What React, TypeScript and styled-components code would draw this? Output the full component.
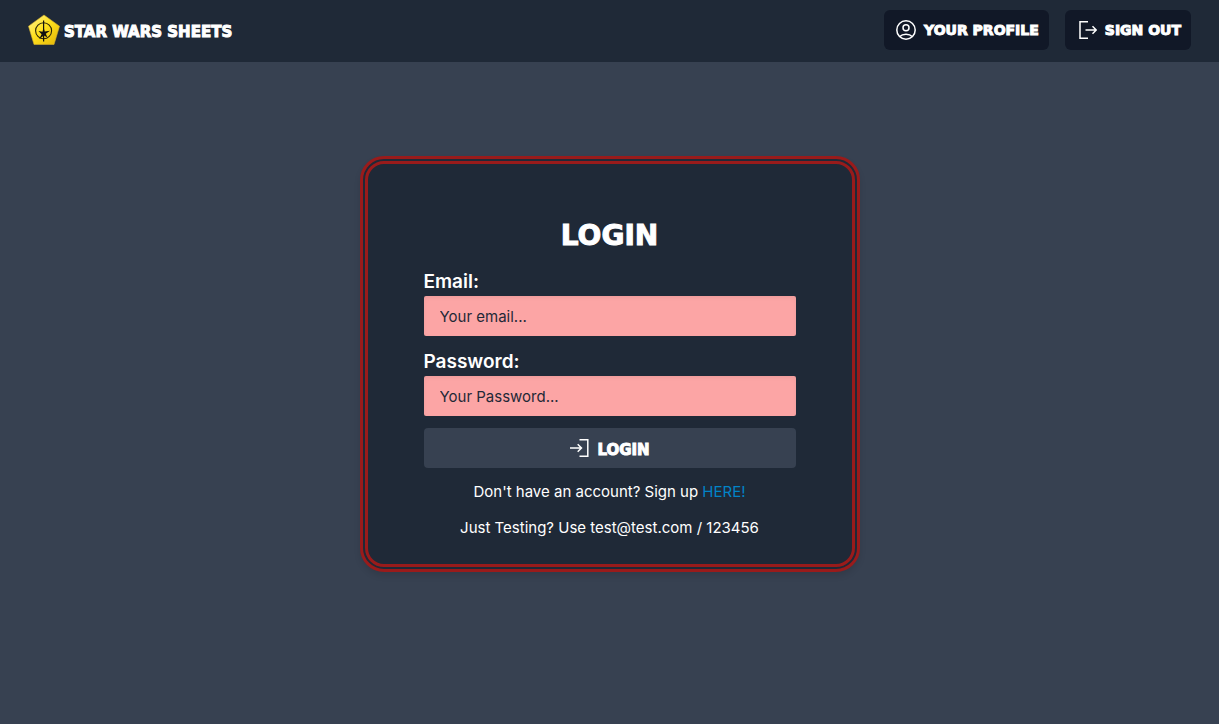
import React from "react";
import styled, { createGlobalStyle } from "styled-components";

const GlobalStyle = createGlobalStyle`
  *, *::before, *::after { box-sizing: border-box; }
  body {
    margin: 0;
    background: #374151;
    color: #fff;
    font-family: Inter, "Liberation Sans", sans-serif;
    font-size: 15px;
    line-height: 24px;
  }
  h1, p { margin: 0; }
  button, input { font: inherit; border: 0; }
`;

const Header = styled.header`
  display: flex;
  align-items: center;
  justify-content: space-between;
  padding: 10px 28px 12px;
  background: #1f2937;
`;

const Brand = styled.a`
  display: flex;
  align-items: center;
  gap: 4px;
  color: inherit;
  text-decoration: none;
`;

const Display = styled.span<{ $size: number }>`
  display: block;
  font-family: "DejaVu Sans", sans-serif;
  font-weight: 700;
  font-size: ${({ $size }) => $size}px;
  -webkit-text-stroke: 1px currentColor;
  text-transform: uppercase;
  white-space: nowrap;
`;

const LoweredDisplay = styled(Display)`
  padding-top: 4px;
`;

const Nav = styled.nav`
  display: flex;
  gap: 16px;
`;

const NavButton = styled.button`
  display: flex;
  align-items: center;
  gap: 8px;
  height: 40px;
  padding: 0 10px 0 12px;
  border-radius: 6px;
  background: #111827;
  color: #fff;
  cursor: pointer;
`;

const Main = styled.main`
  display: flex;
  justify-content: center;
  padding: 94px 16px;
`;

const Card = styled.form`
  display: flex;
  flex-direction: column;
  gap: 12px;
  width: 100%;
  max-width: 500px;
  padding: 52px 56px 24px;
  border: 8px double #991b1b;
  border-radius: 24px;
  background: #1f2937;
  box-shadow: 0 4px 6px rgba(0, 0, 0, 0.1);
`;

const Title = styled.h1`
  line-height: 40px;
  text-align: center;
`;

const Field = styled.label`
  display: flex;
  flex-direction: column;
  font-size: 19px;
  font-weight: 600;
  line-height: 28px;
`;

const TextInput = styled.input`
  width: 100%;
  height: 40px;
  padding: 0 16px;
  border-radius: 2px;
  background: #fca5a5;
  box-shadow: inset 0 2px 4px rgba(0, 0, 0, 0.06);
  color: #1f2937;
  font-size: 15px;
  font-weight: 400;
  &::placeholder { color: #1f2937; opacity: 1; }
`;

const SubmitButton = styled.button`
  display: flex;
  align-items: center;
  justify-content: center;
  gap: 8px;
  height: 40px;
  border-radius: 4px;
  background: #374151;
  color: #fff;
  cursor: pointer;
`;

const Note = styled.p`
  text-align: center;
`;

const SignUpLink = styled.a`
  color: #0284c7;
  text-decoration: none;
`;

const Icon = styled.svg.attrs({
  width: 20,
  height: 20,
  viewBox: "0 0 20 20",
  fill: "none",
  stroke: "currentColor",
  strokeWidth: 1.5,
  "aria-hidden": true,
})`
  flex: none;
`;

const ProfileIcon = () => (
  <Icon>
    <circle cx="10" cy="10" r="9.2" />
    <circle cx="10" cy="7.8" r="3" />
    <path d="M3.8 16.6C5.2 15 7.3 14.2 10 14.2s4.8.8 6.2 2.4" />
  </Icon>
);

const SignOutIcon = () => (
  <Icon>
    <path d="M11 1.700H3V18.300H11" />
    <path d="M8.500 10H19.500M15.500 6.200 19.300 10 15.500 13.800" />
  </Icon>
);

const SignInIcon = () => (
  <Icon>
    <path d="M10.500 1.700H18.800V18.300H10.500" />
    <path d="M1 10H12.500M8.700 6.200 12.500 10 8.700 13.800" />
  </Icon>
);

const Logo = () => (
  <svg width="32" height="32" viewBox="0 0 32 32" aria-hidden="true">
    <defs>
      <linearGradient id="gold" x1="0" y1="0" x2="1" y2="1">
        <stop offset="0" stopColor="#fff3a0" />
        <stop offset="0.45" stopColor="#ffe11f" />
        <stop offset="1" stopColor="#e3b505" />
      </linearGradient>
    </defs>
    <path d="M16 1 31.5 12.2 26 30.5H6L.5 12.2Z" fill="url(#gold)" stroke="#d8b22a" strokeWidth="0.6" />
    <circle cx="15.6" cy="16.8" r="8" fill="none" stroke="#2b2608" strokeWidth="1.1" />
    <path d="M15.600 6.500V27.500" stroke="#111" strokeWidth="1.2" />
    <path d="M15.600 13.500 16.700 17.600 22 16.800 17.800 19.800 19.500 23.500 15.900 21.400 11.200 25 13.600 20.200 10.500 17 14.500 17.800Z" fill="#111" />
  </svg>
);

export default function App() {
  return (
    <>
      <GlobalStyle />
      <Header>
        <Brand href="#">
          <Logo />
          <LoweredDisplay $size={15}>Star Wars Sheets</LoweredDisplay>
        </Brand>
        <Nav>
          <NavButton type="button">
            <ProfileIcon />
            <Display $size={14}>Your Profile</Display>
          </NavButton>
          <NavButton type="button">
            <SignOutIcon />
            <Display $size={14}>Sign out</Display>
          </NavButton>
        </Nav>
      </Header>
      <Main>
        <Card onSubmit={(event) => event.preventDefault()}>
          <Title>
            <Display $size={28}>Login</Display>
          </Title>
          <Field>
            Email:
            <TextInput type="email" name="email" placeholder="Your email..." />
          </Field>
          <Field>
            Password:
            <TextInput type="password" name="password" placeholder="Your Password..." />
          </Field>
          <SubmitButton type="submit">
            <SignInIcon />
            <LoweredDisplay $size={15}>Login</LoweredDisplay>
          </SubmitButton>
          <Note>
            Don't have an account? Sign up <SignUpLink href="#">HERE!</SignUpLink>
          </Note>
          <Note>Just Testing? Use test@test.com / 123456</Note>
        </Card>
      </Main>
    </>
  );
}
